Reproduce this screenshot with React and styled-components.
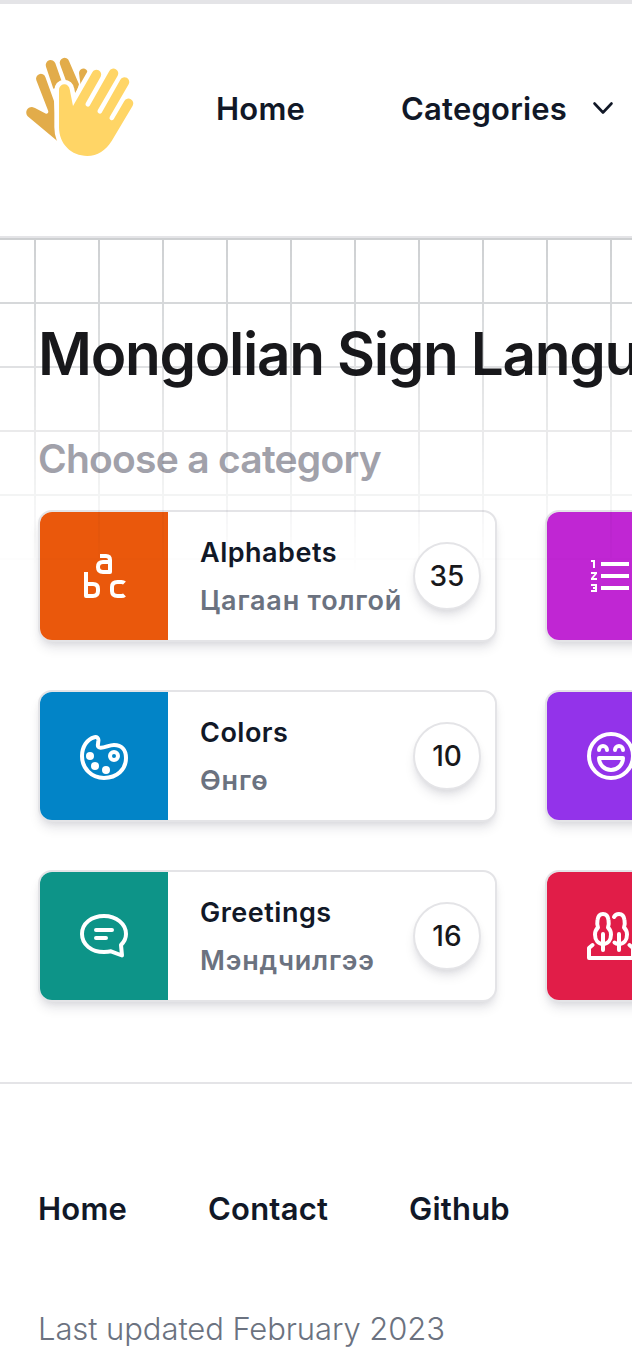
import React from "react";
import styled, { createGlobalStyle } from "styled-components";
import { MdFormatListNumbered } from "react-icons/md";

const GlobalStyle = createGlobalStyle`
  *, *::before, *::after { box-sizing: border-box; }
  html, body { margin: 0; padding: 0; overflow: hidden; background: #fff; }
  body { font-family: Inter, "Liberation Sans", sans-serif; color: #18181b; }
  a { color: inherit; text-decoration: none; }
  h1, h2, h3, p { margin: 0; }
`;

const Page = styled.div`
  width: 100%;
  height: 1368px;
  overflow: hidden;
  border-top: 4px solid #e4e4e7;
`;

const Header = styled.header`
  display: flex;
  align-items: center;
  height: 234px;
  padding: 0 0 23px 16px;
  border-bottom: 2px solid #e4e4e7;
  white-space: nowrap;
`;

const Logo = styled.svg`
  flex: none;
  width: 128px;
  height: 128px;
  margin: 0 72px 3px 0;
`;

const NavLink = styled.a`
  flex: none;
  font-size: 31px;
  line-height: 48px;
  font-weight: 600;
  letter-spacing: 0.2px;
  color: #111827;
`;

const CategoriesLink = styled(NavLink)`
  display: flex;
  align-items: center;
  gap: 24px;
  margin-left: 96px;
`;

const Chevron = styled.svg`
  width: 24px;
  height: 24px;
  margin-bottom: 2px;
`;

const Main = styled.main`
  position: relative;
  height: 844px;
  padding: 80px 0 0 38px;
`;

const GridOverlay = styled.div`
  position: absolute;
  inset: 0 0 auto 0;
  height: 352px;
  pointer-events: none;
  opacity: 0.2;
  background-image:
    linear-gradient(to right, #0b1620 2px, transparent 2px),
    linear-gradient(to bottom, #0b1620 2px, transparent 2px);
  background-size: 64px 64px;
  background-position: 34px 0, 0 0;
  mask-image: linear-gradient(to bottom, #000, transparent 96%);
`;

const Title = styled.h1`
  font-size: 58.5px;
  line-height: 72px;
  font-weight: 600;
  letter-spacing: -1.33px;
  white-space: nowrap;
`;

const Subtitle = styled.h2`
  margin-top: 41px;
  font-size: 39px;
  line-height: 56px;
  font-weight: 600;
  letter-spacing: -0.75px;
  color: #a1a1aa;
`;

const CardGrid = styled.div`
  display: grid;
  grid-template-columns: 459px 459px;
  gap: 48px;
  margin-top: 23px;
`;

const Card = styled.a`
  display: flex;
  align-items: center;
  height: 132px;
  padding-right: 14px;
  border: 2px solid #e4e4e7;
  border-radius: 14px;
  background: #fff;
  box-shadow: 0 8px 12px -2px rgba(24, 24, 50, 0.1), 0 4px 8px -4px rgba(24, 24, 50, 0.12);
`;

const Swatch = styled.div`
  display: grid;
  place-items: center;
  flex: none;
  width: 128px;
  height: 128px;
  border-radius: 12px 0 0 12px;
  background: ${(p) => p.$color};
  color: #fff;
`;

const CardText = styled.div`
  flex: 1;
  min-width: 0;
  padding: 2px 0 0 32px;
  white-space: nowrap;
`;

const CardTitle = styled.h3`
  font-size: 27px;
  line-height: 48px;
  font-weight: 570;
  letter-spacing: 0.5px;
  color: #111827;
`;

const CardSubtitle = styled.p`
  font-size: 27px;
  line-height: 48px;
  font-weight: 570;
  letter-spacing: 0.8px;
  color: #6b7280;
`;

const Count = styled.span`
  position: relative;
  z-index: 1;
  display: grid;
  place-items: center;
  flex: none;
  width: 68px;
  height: 68px;
  border: 2px solid #e4e4e7;
  border-radius: 50%;
  background: #fff;
  font-size: 28px;
  font-weight: 500;
  box-shadow: 0 8px 12px -2px rgba(24, 24, 50, 0.1), 0 4px 8px -4px rgba(24, 24, 50, 0.12);
`;

const Footer = styled.footer`
  padding: 101px 38px 0;
  border-top: 2px solid #e4e4e7;
`;

const FooterLinks = styled.nav`
  display: flex;
  gap: 81px;
`;

const Updated = styled.p`
  margin-top: 72px;
  font-size: 31px;
  line-height: 48px;
  font-weight: 300;
  letter-spacing: -0.08px;
  color: #6b7280;
`;

const LineIcon = styled.svg.attrs({ viewBox: "0 0 48 48" })`
  width: 48px;
  height: 48px;
  fill: none;
  stroke: currentColor;
  stroke-width: 4;
  stroke-linecap: ${(p) => p.$cap || "round"};
  stroke-linejoin: round;
`;

const AlphabetIcon = () => (
  <LineIcon $cap="butt">
    <path d="M20 4h6q4 0 4 4v12h-7q-5 0-5-5t5-5h7" />
    <path d="M6 20v24h7q5 0 5-5v-2q0-5-5-5H6" />
    <path d="M44.500 31q-1-1-3-1h-4q-5.500 0-5.500 5v4q0 5 5.500 5h4q2 0 3-1" />
  </LineIcon>
);

const PaletteIcon = () => (
  <LineIcon>
    <path d="M18.4 8.5C18.6 6 17 4.8 14.5 5.2C7 7 2 15 2 24C2 36.5 11.5 46 24 46C37 46 46 37.500 46 26C46 17.500 41.500 13 34 13C29 13 25 16 20.500 15.800C18 15.600 17.600 14 18 12Z" />
    <circle cx="34" cy="24" r="4" />
    <g fill="currentColor" stroke="none">
      <circle cx="10" cy="24" r="4" />
      <circle cx="15" cy="34" r="4" />
      <circle cx="26" cy="38" r="4" />
    </g>
  </LineIcon>
);

const ChatIcon = () => (
  <LineIcon>
    <path d="M31 39.300C29 39.800 26.500 40 24 40C11.500 40 2 32.500 2 22S11.500 4 24 4S46 12 46 22C46 26.500 44 30 41 33L42 43.500L31 39.300Z" />
    <path d="M16 18h16M16 26h10" />
  </LineIcon>
);

const SmileIcon = () => (
  <LineIcon>
    <circle cx="24" cy="24" r="22" />
    <path d="M12 18a4 4 0 0 1 8 0M28 18a4 4 0 0 1 8 0M12 26h24a12 12 0 0 1-24 0Z" />
  </LineIcon>
);

const TreesIcon = () => (
  <LineIcon>
    <path d="M16 32C11 32 8 28 8 22.500C8 19 9.500 17 11 15.500C10 13 10 11 10.500 8C11 4 13 2 16 2S21 4 21.500 8C22 11 22 13 21 15.500C22.500 17 24 19 24 22.500C24 28 21 32 16 32Z" />
    <path d="M27 5C28 3 30 2 32 2C35 2 37 4 37.500 8C38 11 38 13 37 15.500C38.500 17 40 19 40 22.500C40 28 37 32 32 32C30 32 28.500 31.500 27.500 30.500" />
    <path d="M16 22v16M32 22v16M5.500 33L2 36V46H46V36L42.500 33" />
  </LineIcon>
);

const NumbersIcon = () => <MdFormatListNumbered size={48} />;

const HandsLogo = () => (
  <Logo viewBox="48 9 384 384">
    <g fill="#e2ac4a">
      <path d="M83 229C73 216 82 201 96 201Q101 202 105 204L138 221Q146 222 145 214L109 121A14 14 0 0 1 136 111L162 183L172 303Z" />
      <path d="M138 80A14.500 14.500 0 0 1 166 70L190 138L160 146Z" />
      <path d="M180 73A14 14 0 0 1 207 63L237 133L227 164L198 122Z" />
      <path d="M237 99A13 13 0 0 1 263 98L242 137Z" />
    </g>
    <path
      fill="#ffd566"
      stroke="#fff"
      strokeWidth="28"
      strokeLinejoin="round"
      paintOrder="stroke"
      d="M177 150A16 16 0 0 1 209 148L219 198L277 97A14 14 0 0 1 302 110L257 190A7 7 0 0 0 269 197L328 93A14 14 0 0 1 353 107L293 211A7 7 0 0 0 305 218L361 119A14 14 0 0 1 386 133L329 231A7 7 0 0 0 341 238L373 183A14 14 0 0 1 398 197L335 303C318 331 292 348 262 348C214 348 177 312 177 262Z"
    />
  </Logo>
);

const categories = [
  { id: "alphabets", title: "Alphabets", native: "Цагаан толгой", count: 35, color: "#ea580c", Icon: AlphabetIcon },
  { id: "numbers", color: "#c026d3", Icon: NumbersIcon },
  { id: "colors", title: "Colors", native: "Өнгө", count: 10, color: "#0284c7", Icon: PaletteIcon },
  { id: "emotions", color: "#9333ea", Icon: SmileIcon },
  { id: "greetings", title: "Greetings", native: "Мэндчилгээ", count: 16, color: "#0d9488", Icon: ChatIcon },
  { id: "nature", color: "#e11d48", Icon: TreesIcon },
];

export default function App() {
  return (
    <>
      <GlobalStyle />
      <Page>
        <Header>
          <HandsLogo />
          <NavLink href="#">Home</NavLink>
          <CategoriesLink href="#">
            Categories
            <Chevron viewBox="0 0 24 24" fill="none" stroke="currentColor" strokeWidth="2.6" strokeLinecap="round" strokeLinejoin="round">
              <path d="M3.500 7.500L12 16.500L20.500 7.500" />
            </Chevron>
          </CategoriesLink>
        </Header>
        <Main>
          <Title>Mongolian Sign Language</Title>
          <Subtitle>Choose a category</Subtitle>
          <CardGrid>
            {categories.map(({ id, title, native, count, color, Icon }) => (
              <Card href="#" key={id}>
                <Swatch $color={color}>
                  <Icon />
                </Swatch>
                {title && (
                  <CardText>
                    <CardTitle>{title}</CardTitle>
                    <CardSubtitle>{native}</CardSubtitle>
                  </CardText>
                )}
                {count && <Count>{count}</Count>}
              </Card>
            ))}
          </CardGrid>
          <GridOverlay />
        </Main>
        <Footer>
          <FooterLinks>
            <NavLink href="#">Home</NavLink>
            <NavLink href="#">Contact</NavLink>
            <NavLink href="#">Github</NavLink>
          </FooterLinks>
          <Updated>Last updated February 2023</Updated>
        </Footer>
      </Page>
    </>
  );
}
